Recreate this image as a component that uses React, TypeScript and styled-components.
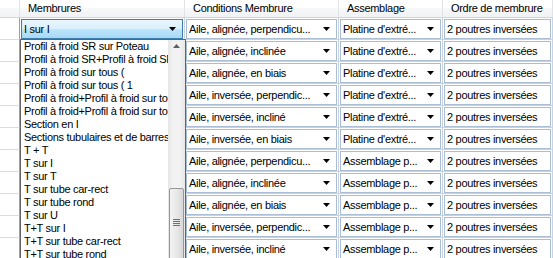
import React from 'react';
import styled, { createGlobalStyle } from 'styled-components';

const GlobalStyle = createGlobalStyle`
  html, body { margin: 0; padding: 0; background: #fff; }
  body {
    font-family: "Liberation Sans", Arial, sans-serif;
    font-size: 11px;
    letter-spacing: -0.3px;
    color: #000;
  }
`;

const COLS = '20px 165px 154px 104px 110px';

const Grid = styled.div`
  position: relative;
  width: 553px;
  height: 258px;
  overflow: hidden;
  background: #fff;
`;

const HeaderRow = styled.div`
  display: grid;
  grid-template-columns: ${COLS};
  height: 17px;
  border-bottom: 1px solid #d5d5d5;
  background: linear-gradient(#ffffff, #ffffff 50%, #f7f8fa 50%, #f1f2f4);
`;

const HeaderCell = styled.div`
  border-right: 1px solid #e1e3e6;
  padding-left: 8px;
  line-height: 17px;
  white-space: nowrap;
  overflow: hidden;
`;

const Row = styled.div`
  display: grid;
  grid-template-columns: ${COLS};
  height: 22px;
`;

const RowHead = styled.div`
  border-right: 1px solid #a0a0a0;
  border-bottom: 1px solid #dcdcdc;
`;

const Cell = styled.div`
  box-sizing: border-box;
  padding: 1px 1px 0 1px;
  border-right: 1px solid #c9d3df;
  border-bottom: 1px solid #c9d3df;
  min-width: 0;
`;

const Combo = styled.div<{ $focused?: boolean }>`
  box-sizing: border-box;
  height: 100%;
  display: flex;
  align-items: center;
  padding: 0 6px 0 2px;
  border: 1px solid ${p => (p.$focused ? '#3c7fb1' : '#a9bdd5')};
  background: ${p =>
    p.$focused ? 'linear-gradient(#eaf6fd, #d9f0fc 50%, #bee6fd 50%, #a7d9f5)' : '#fff'};
`;

const ComboText = styled.span`
  flex: 1;
  white-space: nowrap;
  overflow: hidden;
`;

const Arrow = () => (
  <svg width="7" height="4" viewBox="0 0 7 4">
    <polygon points="0,0 7,0 3.5,4" fill="#000" />
  </svg>
);

const DropDown = styled.div`
  position: absolute;
  left: 20px;
  top: 39px;
  width: 166px;
  height: 240px;
  box-sizing: border-box;
  border: 1px solid #646464;
  background: #fff;
  display: flex;
`;

const List = styled.div`
  flex: 1;
  min-width: 0;
  overflow: hidden;
`;

const Item = styled.div`
  height: 13px;
  line-height: 13px;
  padding-left: 3px;
  white-space: nowrap;
  overflow: hidden;
`;

const ScrollBar = styled.div`
  width: 17px;
  display: flex;
  flex-direction: column;
  background: linear-gradient(to right, #e6e6e6, #f2f2f2 30%, #f2f2f2 70%, #e8e8e8);
`;

const ScrollButton = styled.div`
  height: 17px;
  display: flex;
  align-items: center;
  justify-content: center;
`;

const Track = styled.div`
  flex: 1;
  padding: 136px 1px 0 1px;
`;

const Thumb = styled.div`
  height: 90px;
  box-sizing: border-box;
  border: 1px solid #979797;
  border-radius: 2px;
  background: linear-gradient(to right, #f3f3f3, #e9e9e9 50%, #d8d8d8);
  display: flex;
  flex-direction: column;
  align-items: center;
  padding-top: 30px;
  gap: 1px;
`;

const Grip = styled.div`
  width: 7px;
  height: 1px;
  background: #707070;
`;

const UpArrow = () => (
  <svg width="7" height="4" viewBox="0 0 7 4">
    <polygon points="3.5,0 7,4 0,4" fill="#606060" />
  </svg>
);

const membrures = [
  'Profil à froid SR sur Poteau',
  'Profil à froid SR+Profil à froid SR',
  'Profil à froid sur tous (',
  'Profil à froid sur tous ( 1',
  'Profil à froid+Profil à froid sur tous',
  'Profil à froid+Profil à froid sur tous',
  'Section en I',
  'Sections tubulaires et de barres',
  'T + T',
  'T sur I',
  'T sur T',
  'T sur tube car-rect',
  'T sur tube rond',
  'T sur U',
  'T+T sur I',
  'T+T sur tube car-rect',
  'T+T sur tube rond',
];

const rows = [
  ['Aile, alignée, perpendicu...', "Platine d'extré..."],
  ['Aile, alignée, inclinée', "Platine d'extré..."],
  ['Aile, alignée, en biais', "Platine d'extré..."],
  ['Aile, inversée, perpendic...', "Platine d'extré..."],
  ['Aile, inversée, incliné', "Platine d'extré..."],
  ['Aile, inversée, en biais', "Platine d'extré..."],
  ['Aile, alignée, perpendicu...', 'Assemblage p...'],
  ['Aile, alignée, inclinée', 'Assemblage p...'],
  ['Aile, alignée, en biais', 'Assemblage p...'],
  ['Aile, inversée, perpendic...', 'Assemblage p...'],
  ['Aile, inversée, incliné', 'Assemblage p...'],
];

export default function App() {
  return (
    <>
      <GlobalStyle />
      <Grid>
        <HeaderRow>
          <HeaderCell />
          <HeaderCell>Membrures</HeaderCell>
          <HeaderCell>Conditions Membrure</HeaderCell>
          <HeaderCell>Assemblage</HeaderCell>
          <HeaderCell>Ordre de membrure</HeaderCell>
        </HeaderRow>
        {rows.map(([cond, assemblage], i) => (
          <Row key={i}>
            <RowHead />
            {/* only the first Membrures cell shows: the open list covers the rest */}
            <Cell>
              {i === 0 && (
                <Combo $focused>
                  <ComboText>I sur I</ComboText>
                  <Arrow />
                </Combo>
              )}
            </Cell>
            <Cell>
              <Combo>
                <ComboText>{cond}</ComboText>
                <Arrow />
              </Combo>
            </Cell>
            <Cell>
              <Combo>
                <ComboText>{assemblage}</ComboText>
                <Arrow />
              </Combo>
            </Cell>
            <Cell>
              <Combo>
                <ComboText>2 poutres inversées</ComboText>
              </Combo>
            </Cell>
          </Row>
        ))}
        <DropDown>
          <List>
            {membrures.map((m, i) => (
              <Item key={i}>{m}</Item>
            ))}
          </List>
          <ScrollBar>
            <ScrollButton>
              <UpArrow />
            </ScrollButton>
            <Track>
              <Thumb>
                <Grip />
                <Grip />
                <Grip />
                <Grip />
              </Thumb>
            </Track>
          </ScrollBar>
        </DropDown>
      </Grid>
    </>
  );
}
